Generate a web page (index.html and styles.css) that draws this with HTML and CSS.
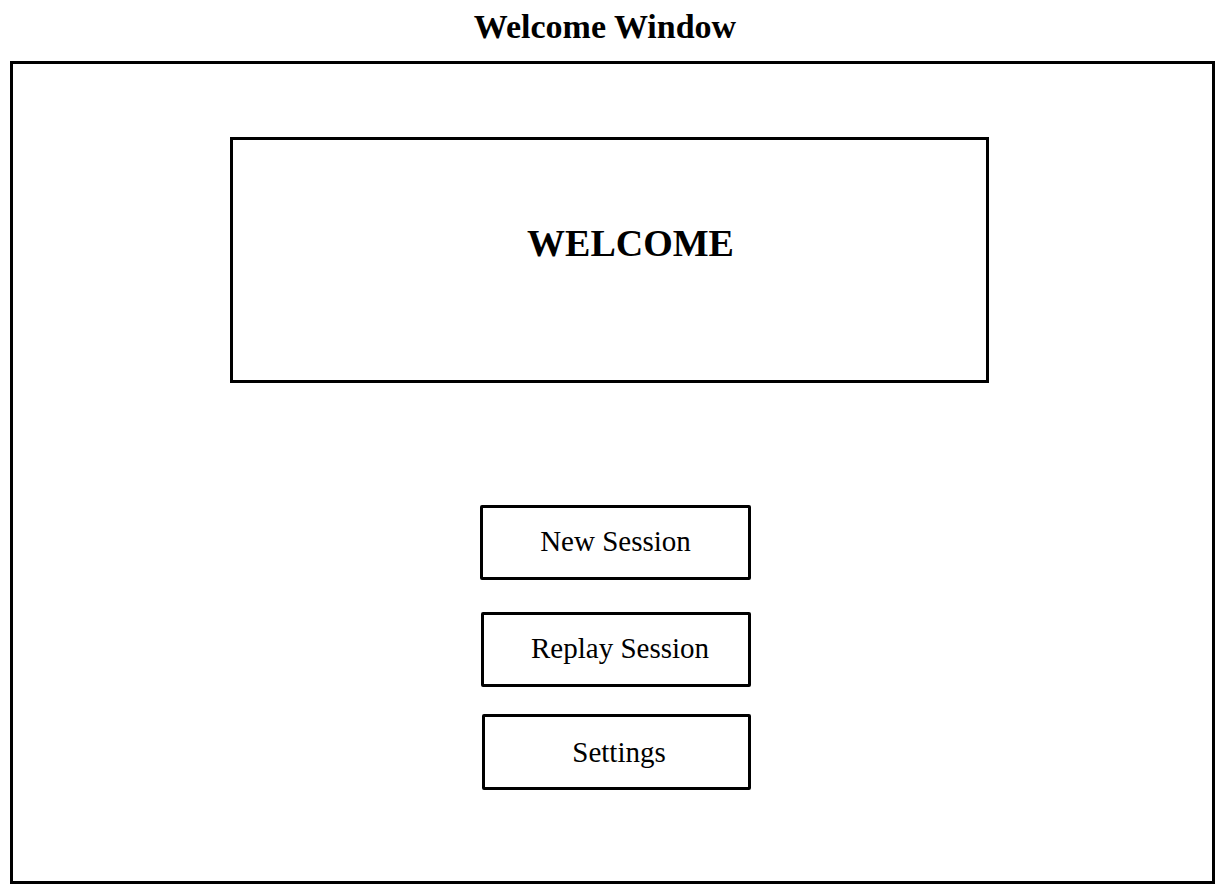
FILE: index.html
```html
<!DOCTYPE html>
<html lang="en">
<head>
    <meta charset="UTF-8">
    <meta name="viewport" content="width=device-width, initial-scale=1.0">
    <title>Welcome Window</title>
    <link rel="stylesheet" href="styles.css">
</head>
<body>

    <h1 class="page-title">Welcome Window</h1>

    <div class="window">
        <div class="welcome-box">
            <h2 class="welcome-text">WELCOME</h2>
        </div>

        <div class="menu">
            <button type="button" class="menu-btn btn-new">New Session</button>
            <button type="button" class="menu-btn btn-replay">Replay Session</button>
            <button type="button" class="menu-btn btn-settings">Settings</button>
        </div>
    </div>

</body>
</html>
```

FILE: styles.css
```css
body {
    font-family: 'Liberation Serif', 'Times New Roman', serif;
    background-color: #fff;
    color: #000;
    margin: 0;
    padding: 0;
}

.page-title {
    font-size: 34px;
    font-weight: bold;
    line-height: 39px;
    text-align: center;
    margin: 7px 0 15px;
    padding-right: 15px;
}

.window {
    box-sizing: border-box;
    width: 1205px;
    height: 823px;
    margin-left: 10px;
    border: 3px solid #000;
}

.welcome-box {
    box-sizing: border-box;
    width: 759px;
    height: 246px;
    margin: 73px 0 0 217px;
    padding: 84px 0 0 42px;
    border: 3px solid #000;
    text-align: center;
}

.welcome-text {
    font-size: 38px;
    font-weight: bold;
    line-height: 1;
    margin: 0;
}

.menu {
    display: flex;
    flex-direction: column;
    align-items: flex-start;
    margin: 122px 0 0 467px;
}

.menu-btn {
    box-sizing: border-box;
    width: 271px;
    height: 75px;
    padding: 0 0 2px;
    background-color: #fff;
    border: 3px solid #000;
    border-radius: 2px;
    font-family: inherit;
    font-size: 29px;
    line-height: 1;
    color: #000;
    cursor: pointer;
}

.btn-replay {
    margin: 32px 0 0 1px;
    width: 270px;
    padding-left: 8px;
}

.btn-settings {
    margin: 27px 0 0 2px;
    width: 269px;
    height: 76px;
    padding: 0 0 0 5px;
}
```
